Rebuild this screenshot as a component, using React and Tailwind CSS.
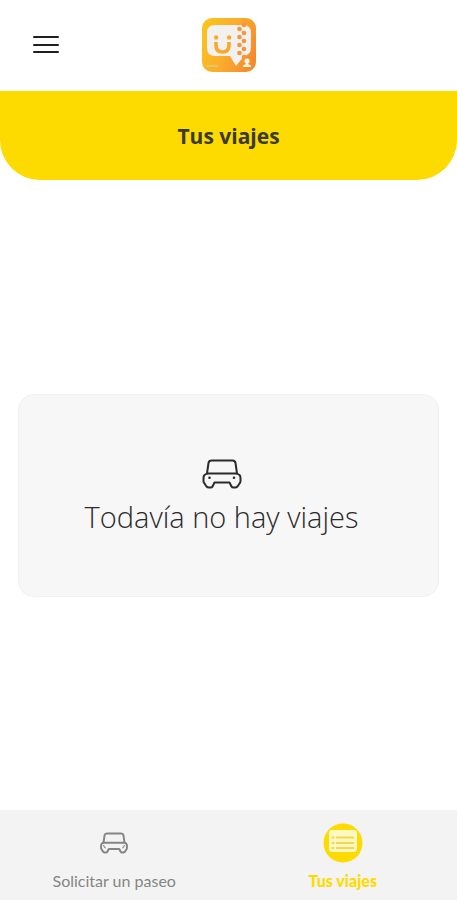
function CarIcon({ className, lights }) {
  return (
    <svg
      viewBox="0 0 40 30"
      className={className}
      fill="none"
      stroke="currentColor"
      strokeWidth={lights ? 2 : 2.8}
      strokeLinejoin="round"
      strokeLinecap="round"
      aria-hidden="true"
    >
      <path d="M5 14.500 L6.500 4 Q7 1.500 9.500 1.500 H30.500 Q33 1.500 33.500 4 L35 14.500" />
      <path d="M5 14.500 H35 L37.500 16 Q38.500 17 38.500 19 V22 Q38.500 23.500 37.500 24.500 L35.500 27.500 Q34.500 28.500 33 28.500 H31.500 Q30 28.500 29.500 27.500 L27.500 23.500 H12.500 L10.500 27.500 Q10 28.500 8.500 28.500 H7 Q5.500 28.500 4.500 27.500 L2.500 24.500 Q1.500 23.500 1.500 22 V19 Q1.500 17 2.500 16 Z" />
      {lights ? (
        <g fill="currentColor" stroke="none">
          <circle cx="7.500" cy="18.800" r="1.300" />
          <circle cx="32" cy="18.800" r="1.300" />
        </g>
      ) : (
        <path d="M5 18.500 L7.500 22 M35 18.500 L32.500 22" strokeWidth="1.500" />
      )}
    </svg>
  );
}

function Logo() {
  return (
    <svg viewBox="0 0 54 54" className="size-[54px]" role="img" aria-label="U">
      <defs>
        <linearGradient id="logoBg" x1="0" y1="0.300" x2="1" y2="0.700">
          <stop offset="0" stopColor="#fbc21f" />
          <stop offset="0.500" stopColor="#fbab2e" />
          <stop offset="1" stopColor="#f58a2c" />
        </linearGradient>
        <linearGradient id="logoFace" x1="0" y1="0" x2="1" y2="0">
          <stop offset="0" stopColor="#fbbd1c" />
          <stop offset="1" stopColor="#f79a35" />
        </linearGradient>
      </defs>
      <rect width="54" height="54" rx="10" fill="url(#logoBg)" />
      <path
        d="M13 7 H41 Q49 7 49 15 V29 Q49 37 42 38 L34 48 L28 38 H13 Q5 38 5 30 V15 Q5 7 13 7 Z"
        fill="#f3f1ef"
      />
      <g fill="url(#logoFace)">
        <circle cx="14" cy="19.500" r="2.200" />
        <circle cx="27" cy="19.500" r="2.200" />
      </g>
      <path d="M14 24 V27 Q14 34 20.500 34 Q27 34 27 27 V24" fill="none" stroke="#f9a82c" strokeWidth="3.600" />
      <g fill="#f7943c">
        <circle cx="42" cy="7" r="2.300" />
        <circle cx="37.500" cy="11" r="2.300" />
        <circle cx="42" cy="15" r="2.300" />
        <circle cx="37.500" cy="19" r="2.300" />
        <circle cx="42" cy="23" r="2.300" />
        <circle cx="37.500" cy="27" r="2.300" />
        <circle cx="42" cy="31" r="2.300" />
        <circle cx="37.500" cy="35" r="2.300" />
        <circle cx="42" cy="39" r="2.300" />
      </g>
      <g fill="#fff4df">
        <circle cx="45" cy="43" r="2.600" />
        <path d="M44 44 H46 V46 L49 47.500 V49 H41 V47.500 L44 46 Z" />
      </g>
      <path d="M5 48 H16" stroke="#e3c86a" strokeWidth="2" />
    </svg>
  );
}

function ListIcon() {
  return (
    <svg viewBox="0 0 40 40" className="size-10" aria-hidden="true">
      <circle cx="20" cy="20" r="19.500" fill="#fedb00" />
      <rect x="6" y="7" width="28" height="22" rx="3" fill="#fff8c2" />
      <g stroke="#f2d84a" strokeWidth="2">
        <path d="M8.500 14.500 H11.500 M13 14.500 H31" />
        <path d="M8.500 20 H11.500 M13 20 H31" />
        <path d="M8.500 25 H11.500 M13 25 H31" />
      </g>
    </svg>
  );
}

export default function App() {
  return (
    <div className="flex min-h-screen flex-col bg-white font-['Open_Sans',sans-serif]">
      <header className="grid grid-cols-[1fr_auto_1fr] items-center px-8 pt-[18px] pb-[19px]">
        <button type="button" aria-label="Menú" className="w-7 justify-self-start text-[#202020]">
          <svg viewBox="0 0 28 20" className="h-5 w-7" stroke="currentColor" strokeWidth="2" strokeLinecap="round" aria-hidden="true">
            <path d="M2 2 H26 M2 10 H26 M2 17 H26" />
          </svg>
        </button>
        <Logo />
      </header>
      <div className="flex h-[89px] items-center justify-center rounded-b-[40px] bg-[#fedb00]">
        <h1 className="text-[21px] leading-7 font-bold text-[#3a3a30]">Tus viajes</h1>
      </div>
      <main className="flex flex-1 flex-col justify-center px-[18px]">
        <section className="flex flex-col items-center rounded-2xl border border-[#f1f1f1] bg-[#f7f7f7] pt-16 pr-3.5 pb-[59px] text-[#2b2b2b]">
          <CarIcon className="h-[30px] w-10" lights />
          <p className="mt-2 text-[29px] leading-10 font-[340]">Todavía no hay viajes</p>
        </section>
      </main>
      <nav className="grid h-[90px] grid-cols-2 bg-[#f3f3f3] font-['Lato',sans-serif] text-base leading-5">
        <a href="#paseo" className="flex flex-col items-center pt-[13px] text-[#858585]">
          <span className="flex h-10 items-center">
            <CarIcon className="h-[22px] w-7" />
          </span>
          <span className="mt-2">Solicitar un paseo</span>
        </a>
        <a href="#viajes" aria-current="page" className="flex flex-col items-center pt-[13px] font-black text-[#fedb00]">
          <ListIcon />
          <span className="mt-2">Tus viajes</span>
        </a>
      </nav>
    </div>
  );
}
